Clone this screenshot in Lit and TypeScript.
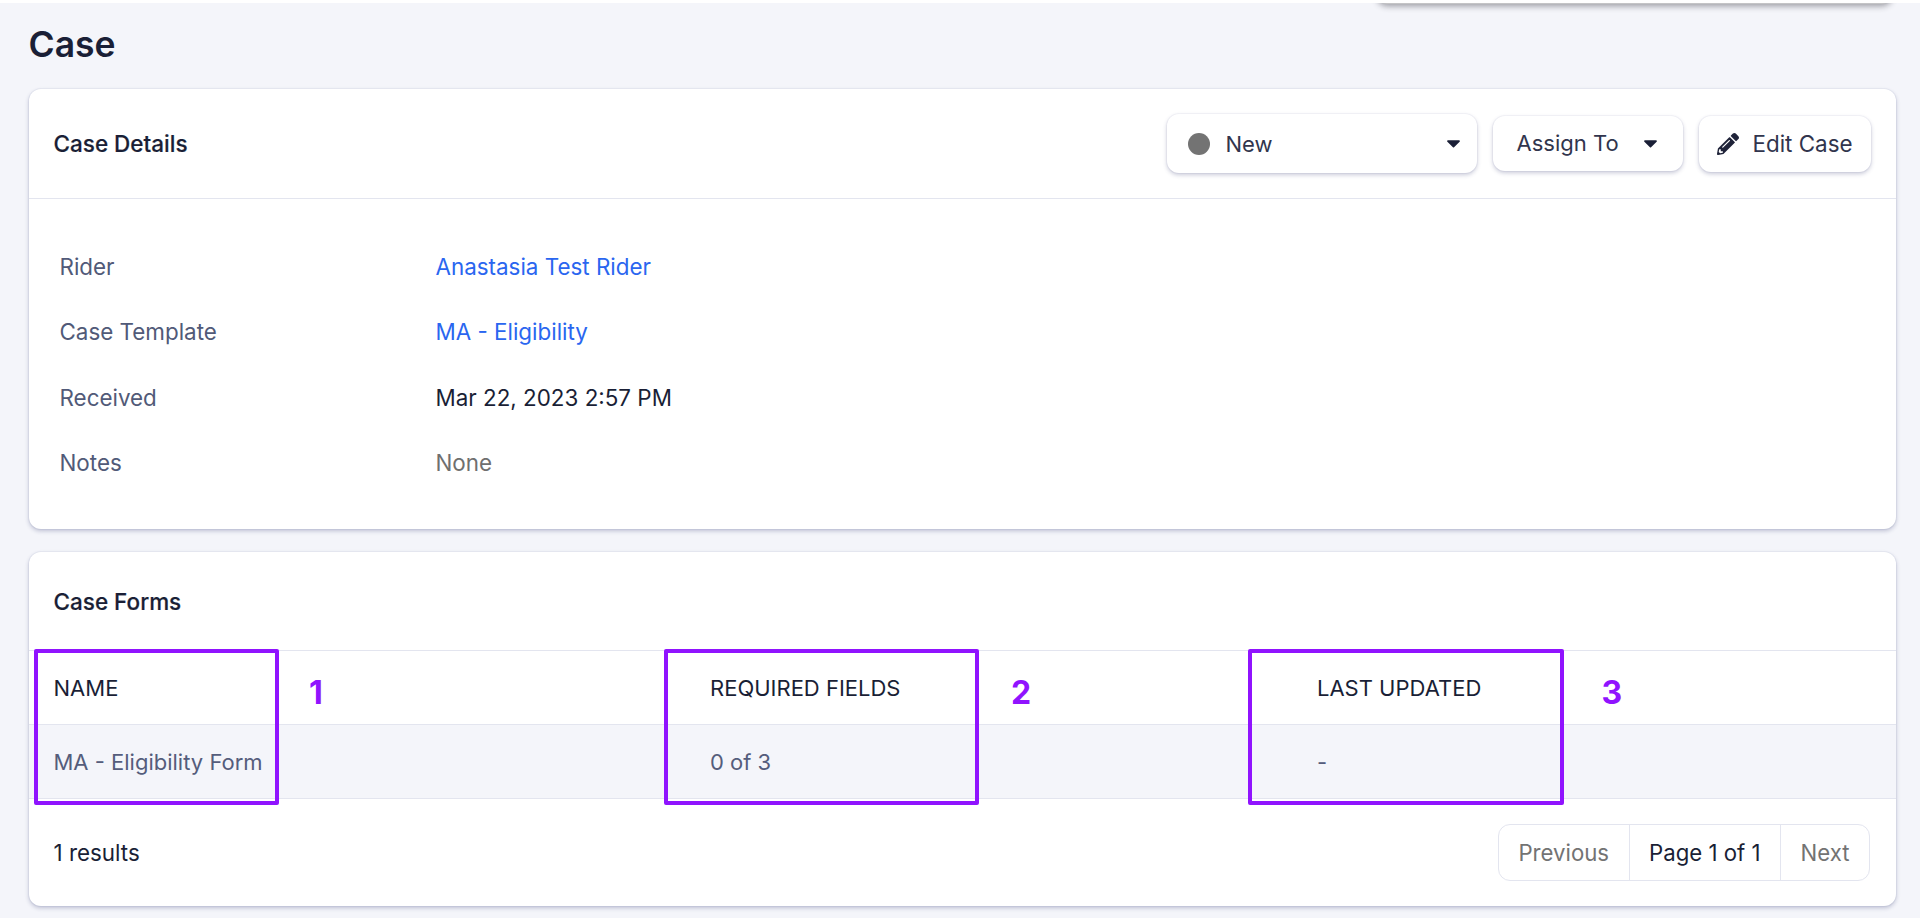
import { LitElement, html, css, svg } from 'lit'
import { customElement } from 'lit/decorators.js'

const caret = html`<svg class="caret" viewBox="0 0 14 8"><path d="M1 0h12c.8 0 1.2 1 .6 1.6L7.6 7.6c-.3.3-.9.3-1.2 0L.4 1.6C-.2 1 .2 0 1 0z" /></svg>`

const pencil = svg`<path d="M497.9 142.1l-46.1 46.1c-4.7 4.7-12.3 4.7-17 0l-111-111c-4.7-4.7-4.7-12.3 0-17l46.1-46.1c18.7-18.7 49.1-18.7 67.9 0l60.1 60.1c18.8 18.7 18.8 49.1 0 67.9zM284.2 99.8L21.6 362.4.4 483.9c-2.9 16.4 11.4 30.6 27.8 27.8l121.5-21.3 262.6-262.6c4.7-4.7 4.7-12.3 0-17l-111-111c-4.8-4.7-12.4-4.7-17.1 0zM124.1 339.9c-5.5-5.5-5.5-14.3 0-19.8l154-154c5.5-5.5 14.3-5.5 19.8 0s5.5 14.3 0 19.8l-154 154c-5.5 5.5-14.3 5.5-19.8 0zM88 424h48v36.3l-64.5 11.3-31.1-31.1L51.7 376H88v48z" />`

@customElement('app-root')
export class AppRoot extends LitElement {
  static styles = css`
    :host {
      display: block;
      position: relative;
      height: 918px;
      overflow: hidden;
      box-sizing: border-box;
      border-top: 3px solid #fff;
      background: #f4f5fa;
      font-family: Inter, 'Liberation Sans', sans-serif;
      font-size: 22.4px;
      color: #1a1f36;
    }
    .page {
      padding: 0 24px 0 28.5px;
    }
    .popup {
      position: absolute;
      top: -20px;
      right: 28px;
      width: 515px;
      height: 21px;
      border-radius: 10px;
      background: #c4c4c6;
      box-shadow: 0 2px 6px rgba(40, 40, 50, 0.45);
    }
    h1 {
      margin: 0;
      height: 86px;
      font-size: 35.5px;
      line-height: 83px;
      font-weight: 600;
    }
    .card {
      background: #fff;
      border-radius: 12px;
      box-shadow: 0 0 0 1px rgba(90, 95, 150, 0.06), 0 2px 4px rgba(60, 66, 120, 0.3);
    }
    .details {
      height: 440px;
      margin-bottom: 23px;
    }
    .card-head {
      display: flex;
      align-items: center;
      justify-content: space-between;
      box-sizing: border-box;
      height: 110px;
      padding: 0 25.5px 0 25px;
      border-bottom: 1px solid #e3e5ef;
    }
    h2 {
      margin: 0;
      font-size: 22.5px;
      font-weight: 500;
      -webkit-text-stroke: 0.2px currentColor;
    }
    .actions {
      display: flex;
      align-items: center;
      gap: 16px;
    }
    .btn {
      display: flex;
      align-items: center;
      box-sizing: border-box;
      height: 56px;
      border-radius: 12px;
      background: #fff;
      box-shadow: 0 0 0 1px rgba(90, 95, 150, 0.05), 0 2px 4px rgba(60, 66, 120, 0.28);
      color: #31354d;
      font-size: 22px;
    }
    .status {
      width: 310px;
      height: 59px;
      padding: 0 17px 0 21px;
    }
    .dot {
      width: 22px;
      height: 22px;
      border-radius: 50%;
      background: #737373;
      margin-right: 16px;
    }
    .status .caret {
      margin-left: auto;
    }
    .assign {
      width: 190px;
      height: 55px;
      padding: 0 26px 0 24px;
      justify-content: space-between;
    }
    .assign-label {
      padding-bottom: 2px;
    }
    .edit {
      width: 172px;
      padding: 0 18px;
      justify-content: space-between;
      font-size: 22.4px;
    }
    .caret {
      width: 13px;
      height: 8px;
      fill: #1a1f36;
    }
    .pencil {
      width: 22px;
      height: 22px;
      fill: #1f2339;
    }
    .fields {
      display: grid;
      grid-template-columns: 376px 1fr;
      grid-auto-rows: 65.3px;
      align-items: center;
      padding: 35px 31px;
    }
    .label {
      color: #515a78;
    }
    .link {
      color: #2a66f0;
    }
    .muted {
      color: #6f6f6f;
    }
    .card-title {
      display: flex;
      align-items: center;
      box-sizing: border-box;
      height: 99px;
      padding-left: 25px;
      border-bottom: 1px solid #e3e5ef;
    }
    .forms {
      height: 354px;
    }
    .table {
      position: relative;
      display: grid;
      grid-template-columns: 681.5px 607px 1fr;
      grid-auto-rows: 74px;
      font-size: 22px;
    }
    .cell {
      display: flex;
      align-items: center;
      border-bottom: 1px solid #e3e5ef;
    }
    .cell:nth-child(3n + 1) {
      padding-left: 25px;
    }
    .head {
      color: #1a1f36;
      text-transform: uppercase;
    }
    .row {
      background: #f4f5fa;
      color: #555d7c;
    }
    .mark {
      position: absolute;
      top: -2px;
      height: 156px;
      box-sizing: border-box;
      border: 4px solid #9013fe;
      border-radius: 2px;
    }
    .num {
      position: absolute;
      top: 23px;
      font-size: 32px;
      line-height: 38px;
      font-weight: 700;
      color: #9013fe;
    }
    .foot {
      display: flex;
      align-items: center;
      justify-content: space-between;
      padding: 25px 26px 0 25px;
    }
    .pager {
      display: flex;
      height: 57px;
      border: 1px solid #e3e5ef;
      border-radius: 12px;
      box-sizing: border-box;
      font-size: 22.2px;
    }
    .pager span {
      display: flex;
      align-items: center;
      padding: 0 19.5px;
    }
    .pager span + span {
      border-left: 1px solid #e3e5ef;
    }
    .off {
      color: #737373;
    }
  `

  render() {
    return html`
      <div class="popup"></div>
      <div class="page">
        <h1>Case</h1>
        <section class="card details">
          <div class="card-head">
            <h2>Case Details</h2>
            <div class="actions">
              <div class="btn status"><i class="dot"></i>New ${caret}</div>
              <div class="btn assign"><span class="assign-label">Assign To</span> ${caret}</div>
              <div class="btn edit"><svg class="pencil" viewBox="0 0 512 512">${pencil}</svg>Edit Case</div>
            </div>
          </div>
          <div class="fields">
            <span class="label">Rider</span><span class="link">Anastasia Test Rider</span>
            <span class="label">Case Template</span><span class="link">MA - Eligibility</span>
            <span class="label">Received</span><span>Mar 22, 2023 2:57 PM</span>
            <span class="label">Notes</span><span class="muted">None</span>
          </div>
        </section>
        <section class="card forms">
          <div class="card-title"><h2>Case Forms</h2></div>
          <div class="table">
            <div class="cell head">Name</div>
            <div class="cell head">Required Fields</div>
            <div class="cell head">Last Updated</div>
            <div class="cell row">MA - Eligibility Form</div>
            <div class="cell row">0 of 3</div>
            <div class="cell row muted">-</div>
            <div class="mark" style="left: 5.5px; width: 245px"></div>
            <div class="mark" style="left: 635.5px; width: 315px"></div>
            <div class="mark" style="left: 1219.5px; width: 316px"></div>
            <div class="num" style="left: 280.5px">1</div>
            <div class="num" style="left: 982.5px">2</div>
            <div class="num" style="left: 1573px">3</div>
          </div>
          <div class="foot">
            <span>1 results</span>
            <div class="pager">
              <span class="off">Previous</span>
              <span>Page 1 of 1</span>
              <span class="off">Next</span>
            </div>
          </div>
        </section>
      </div>
    `
  }
}
